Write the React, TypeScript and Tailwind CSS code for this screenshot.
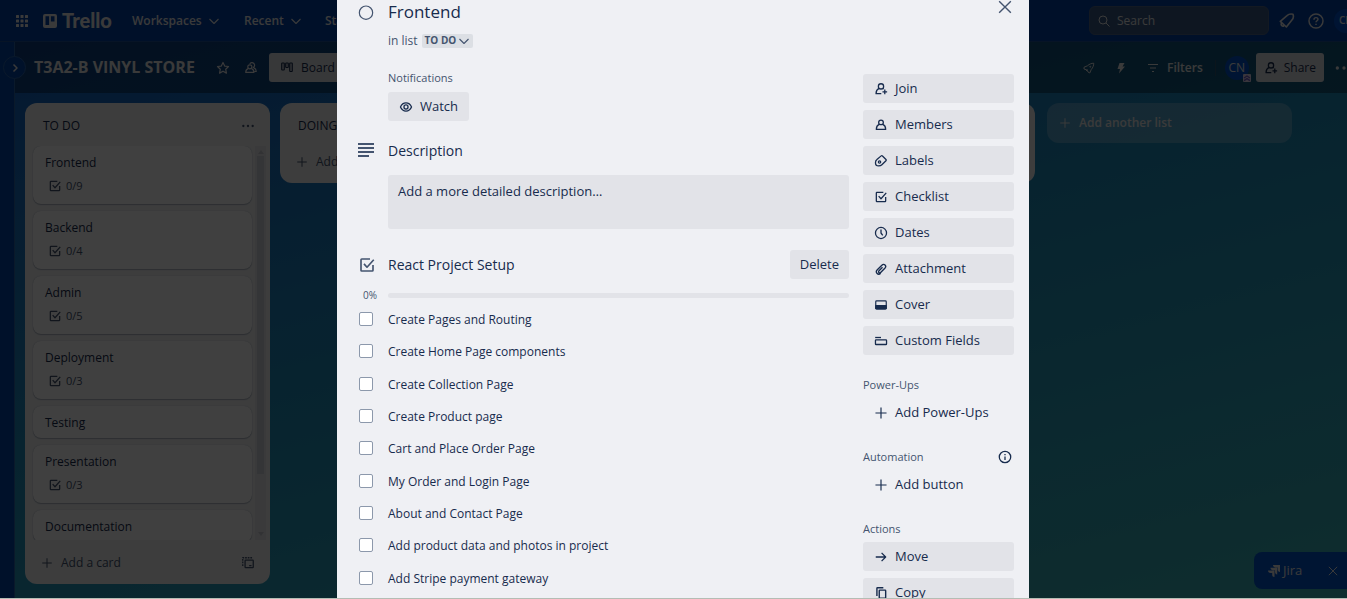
import type { ReactNode } from "react";

type IconProps = { className?: string; children?: ReactNode; w?: number };

function Svg({ className = "size-4", children, w = 2 }: IconProps) {
  return (
    <svg
      viewBox="0 0 24 24"
      className={`shrink-0 ${className}`}
      fill="none"
      stroke="currentColor"
      strokeWidth={w}
      strokeLinejoin="round"
      aria-hidden="true"
    >
      {children}
    </svg>
  );
}

const Chevron = ({ className }: IconProps) => (
  <Svg className={className} w={2.2}><path d="M3 8l9 9 9-9" /></Svg>
);
const Plus = ({ className }: IconProps) => (
  <Svg className={className} w={2}><path d="M12 2.500v19M2.500 12h19" /></Svg>
);
const Cross = ({ className }: IconProps) => (
  <Svg className={className} w={2.4}><path d="M2 2l20 20M22 2L2 22" /></Svg>
);
const CheckSquare = ({ className }: IconProps) => (
  <Svg className={className} w={2.2}>
    <path d="M16 4H5a1 1 0 0 0-1 1v14a1 1 0 0 0 1 1h14a1 1 0 0 0 1-1v-7" />
    <path d="M8 10.500l4 4.500 9-10" />
  </Svg>
);
const Person = ({ className }: IconProps) => (
  <Svg className={className} w={2.2}>
    <circle cx="12" cy="7.500" r="4" />
    <path d="M8.600 11C5.400 12.500 4 15.500 4 19.500h16c0-4-1.400-7-4.600-8.500" />
  </Svg>
);
const PersonAdd = ({ className }: IconProps) => (
  <Svg className={className} w={2.2}>
    <circle cx="12" cy="7.500" r="4.500" />
    <path d="M8.600 11C5.400 12.500 3.500 15.500 3.500 20h9M15 11l1.500 1M18.500 13v8M14.500 17h8" />
  </Svg>
);
const People = ({ className }: IconProps) => (
  <Svg className={className}>
    <circle cx="10" cy="10" r="3.500" />
    <path d="M7 13c-2.800 1-4 3.500-4 6.500h14c0-3-1.200-5.500-4-6.500M10 5c1-3 7-3 8 1 .6 2-.3 3.700-2 5 3 1.200 5 3.500 5 7h-3" />
  </Svg>
);
const Tag = ({ className }: IconProps) => (
  <Svg className={className} w={2.2}>
    <path d="M12.300 3.200L5 9.400C3 11 2.500 12.500 2.500 15c0 3.500 2 5.500 5.500 5.500 2.500 0 4-.5 5.500-2l7-7c.7-.7.7-1.500 0-2.200l-6-6c-.7-.7-1.500-.7-2.200-.1z" />
    <circle cx="9.500" cy="13.800" r="2" />
  </Svg>
);
const Clock = ({ className }: IconProps) => (
  <Svg className={className} w={2.2}><circle cx="12" cy="12" r="9.500" /><path d="M12 6v6l3 4" /></Svg>
);
const Clip = ({ className }: IconProps) => (
  <Svg className={className} w={2.3}>
    <path d="M11.500 19.200c-2 2-4.600 2-6.200.4s-1.600-4.300.4-6.300l7.800-7.800c1.800-1.800 4-1.800 5.400-.4s1.500 3.800-.3 5.600l-7.200 7.200c-1 1-2.200 1-3 .2s-.8-2 .2-3l6-6" />
  </Svg>
);
const Cover = ({ className }: IconProps) => (
  <Svg className={className}>
    <rect x="3" y="5" width="18" height="14" rx="1.500" />
    <path d="M3 13h18v5H3z" fill="currentColor" />
  </Svg>
);
const Fields = ({ className }: IconProps) => (
  <Svg className={className} w={2.2}><path d="M2 6h10" /><rect x="2.500" y="10" width="19" height="8" rx="1" /></Svg>
);
const Arrow = ({ className }: IconProps) => (
  <Svg className={className} w={2.2}><path d="M3 12h17M13 5l7 7-7 7" /></Svg>
);
const Copy = ({ className }: IconProps) => (
  <Svg className={className} w={2.4}>
    <rect x="9" y="7" width="11" height="14" rx="1" />
    <path d="M5 17V4a1 1 0 0 1 1-1h10" />
  </Svg>
);
const Eye = ({ className }: IconProps) => (
  <Svg className={className} w={2.2}>
    <path d="M2.500 12C4.500 7.500 7.500 5 12 5s7.500 2.500 9.500 7c-2 4.500-5 7-9.500 7S4.500 16.500 2.500 12z" />
    <circle cx="12" cy="12" r="3.500" />
  </Svg>
);
const Info = ({ className }: IconProps) => (
  <Svg className={className} w={2.2}>
    <circle cx="12" cy="12" r="9.800" />
    <path d="M12 11v6M12 6.800v2" />
  </Svg>
);
const Help = ({ className }: IconProps) => (
  <Svg className={className} w={2.2}>
    <circle cx="12" cy="12" r="10.500" />
    <path d="M9 10c0-4 6-4 6-.5 0 2-3 2.200-3 4.500M12 16v2" />
  </Svg>
);
const Bell = ({ className }: IconProps) => (
  <Svg className={className} w={2.4}>
    <path d="M2 12.500L12 4c2.500-2.300 6-2.800 9-2 1 2.500.6 6-1.600 8.500L11 21zM3.500 15.500c-1 2.500 1 5 4 4" />
  </Svg>
);
const Rocket = ({ className }: IconProps) => (
  <Svg className={className}>
    <path d="M2 10.500l7-3C13 4 17 2.500 21.500 2.500c0 4.500-1.500 8.500-5 12.500l-3 7-3.500-2-2-4-6-2zM9 15l-3 3" />
    <circle cx="14.500" cy="9.500" r="1" />
  </Svg>
);
const Star = ({ className }: IconProps) => (
  <Svg className={className}>
    <path d="M12 2.500l2.900 6.200 6.600.8-4.900 4.600 1.300 6.700L12 17.500l-5.900 3.300 1.300-6.700-4.900-4.600 6.600-.8z" />
  </Svg>
);
const Dots = ({ className }: IconProps) => (
  <Svg className={className}>
    <g fill="currentColor" stroke="none">
      <circle cx="4" cy="12" r="2" /><circle cx="12" cy="12" r="2" /><circle cx="20" cy="12" r="2" />
    </g>
  </Svg>
);
const BoardIcon = ({ className }: IconProps) => (
  <Svg className={className} w={2.4}>
    <rect x="1.500" y="2" width="5" height="14" rx="1" /><rect x="9.500" y="2" width="5" height="9" rx="1" /><rect x="17.500" y="2" width="5" height="17" rx="1" />
  </Svg>
);
const Template = ({ className }: IconProps) => (
  <Svg className={className} w={2.2}>
    <path d="M3 17V3h17" strokeDasharray="3 1.500" />
    <rect x="7" y="7" width="14" height="13" rx="1" />
    <path d="M14 16.500h4" />
  </Svg>
);

const cards = [
  { title: "Frontend", count: "0/9" },
  { title: "Backend", count: "0/4" },
  { title: "Admin", count: "0/5" },
  { title: "Deployment", count: "0/3" },
  { title: "Testing" },
  { title: "Presentation", count: "0/3" },
  { title: "Documentation" },
];

const items = [
  "Create Pages and Routing",
  "Create Home Page components",
  "Create Collection Page",
  "Create Product page",
  "Cart and Place Order Page",
  "My Order and Login Page",
  "About and Contact Page",
  "Add product data and photos in project",
  "Add Stripe payment gateway",
];

const cardActions = [
  { label: "Join", Icon: PersonAdd },
  { label: "Members", Icon: Person },
  { label: "Labels", Icon: Tag },
  { label: "Checklist", Icon: CheckSquare },
  { label: "Dates", Icon: Clock },
  { label: "Attachment", Icon: Clip },
  { label: "Cover", Icon: Cover },
  { label: "Custom Fields", Icon: Fields },
];

function NavBar() {
  return (
    <header className="flex h-[42px] shrink-0 items-center border-b border-[#1d4f98] bg-[#0040a4] pr-2 pl-4 text-xs font-semibold text-[#e6e6e6]">
      <button aria-label="Apps" className="mr-[15px]">
        <svg viewBox="0 0 12 12" className="size-3" fill="currentColor" aria-hidden="true">
          {[0, 4.5, 9].map((y) => [0, 4.5, 9].map((x) => <rect key={`${x}-${y}`} x={x} y={y} width="3" height="3" rx="0.5" />))}
        </svg>
      </button>
      <a href="#home" className="flex w-[89px] items-center gap-[5px]">
        <svg viewBox="0 0 14 14" className="size-3.5 shrink-0" aria-hidden="true">
          <path fill="currentColor" fillRule="evenodd" d="M2 0h10a2 2 0 0 1 2 2v10a2 2 0 0 1-2 2H2a2 2 0 0 1-2-2V2a2 2 0 0 1 2-2zm.5 2.200v8.800h3.600V2.200zm5.400 0v5.300h3.600V2.200z" />
        </svg>
        <span className="font-['Lato',sans-serif] text-[20px] font-black">Trello</span>
      </a>
      <button className="flex w-[112px] items-center gap-1.5">Workspaces<Chevron className="size-3" /></button>
      <button className="flex w-[81px] items-center gap-1.5">Recent<Chevron className="size-3" /></button>
      <button className="flex items-center gap-1.5">Starred<Chevron className="size-3" /></button>
      <div className="flex-1" />
      <label className="flex h-[29px] w-[180px] items-center gap-[7px] rounded-md border border-[#4d6486] bg-[#3a5a85] px-2 font-normal">
        <Svg className="size-3"><circle cx="10" cy="10" r="8" /><path d="M16 16l7 7" /></Svg>
        <input aria-label="Search" placeholder="Search" className="w-full bg-transparent placeholder:text-[#e6e6e6] outline-none" />
      </label>
      <button aria-label="Notifications" className="ml-2.5"><Bell className="size-4" /></button>
      <button aria-label="Information" className="ml-[13px]"><Help className="size-4" /></button>
      <button className="ml-2.5 grid size-6 place-items-center rounded-full bg-[#0052cc] text-[10px]">CN</button>
    </header>
  );
}

function BoardHeader() {
  return (
    <div className="flex h-[51px] shrink-0 items-center bg-black/35 pl-[19px] text-xs text-[#e6e6e6]">
      <h1 className="w-[182px] text-[16px] font-bold whitespace-nowrap">T3A2-B VINYL STORE</h1>
      <button aria-label="Star board"><Star className="size-3.5" /></button>
      <button aria-label="Visibility" className="ml-3.5"><People className="size-3.5" /></button>
      <button className="ml-[11px] flex h-[29px] items-center gap-2 rounded-[3px] bg-[#dcdfe4] px-3 text-[#172b4d]">
        <BoardIcon className="size-3" />Board
      </button>
      <div className="flex-1" />
      <button aria-label="Power-Ups" className="mr-5"><Rocket className="size-3" /></button>
      <button aria-label="Automation" className="mr-5">
        <Svg className="size-3"><path fill="currentColor" stroke="none" d="M9 2h10l-4 7h5L8 23l2-9H5z" /></Svg>
      </button>
      <button className="flex items-center gap-2 font-semibold">
        <Svg className="size-3"><path d="M2 5h20M6 12h12M10 19h4" /></Svg>Filters
      </button>
      <span className="mr-[9px] ml-3 h-4 w-px bg-[#2f5570]" />
      <button className="relative grid size-6 place-items-center rounded-full bg-[#0052cc] text-xs">
        CN
        <span className="absolute -right-0.5 -bottom-0.5 grid size-2 place-items-center rounded-[1px] bg-[#e4d7f0] text-[#6e5dc6]">
          <Svg className="size-2" w={4}><path d="M3 12l9-6 9 6M3 20l9-6 9 6" /></Svg>
        </span>
      </button>
      <button className="ml-[7px] flex h-[29px] items-center gap-1.5 rounded-[3px] bg-[#dcdfe4] px-2 text-[#172b4d]">
        <PersonAdd className="size-3.5" />Share
      </button>
      <button aria-label="Board menu" className="mr-3 ml-2.5"><Dots className="size-5" /></button>
    </div>
  );
}

function ShortList({ title }: { title: string }) {
  return (
    <section className="flex h-20 w-[245px] shrink-0 flex-col gap-4 rounded-xl bg-[#f1f2f4] px-4 pt-[13px] text-xs text-[#172b4d]">
      <h2 className="pl-0.5 leading-5 font-medium">{title}</h2>
      <button className="flex items-center gap-2 leading-5 font-medium text-[#44546f]"><Plus className="size-3" />Add a card</button>
    </section>
  );
}

function TodoList() {
  return (
    <section className="flex h-[481px] w-[245px] shrink-0 flex-col rounded-xl bg-[#f1f2f4] text-xs text-[#172b4d]">
      <div className="flex h-[43px] shrink-0 items-center justify-between pt-0.5 pr-[15px] pl-[18px]">
        <h2 className="font-medium">TO DO</h2>
        <button aria-label="List actions" className="text-[#44546f]"><Dots className="size-3.5" /></button>
      </div>
      <div className="flex h-[394px] gap-[3px] overflow-hidden pr-1 pl-2">
        <div className="flex flex-1 flex-col gap-[7px]">
          {cards.map((c) => (
            <a
              key={c.title}
              href="#card"
              className={`${c.count ? "h-[58px]" : "h-8"} block shrink-0 rounded-lg bg-white px-3 pt-[7px] shadow-[0_1px_1px_#091e4240,0_0_1px_#091e424f]`}
            >
              <span className="block leading-5">{c.title}</span>
              {c.count && (
                <span className="mt-[5px] flex items-center gap-1 pl-[3px] text-[11px] leading-4 text-[#44546f]">
                  <CheckSquare className="size-3.5" />{c.count}
                </span>
              )}
            </a>
          ))}
        </div>
        <div className="flex w-[11px] flex-col items-center bg-[#e6e7eb] py-1">
          <svg viewBox="0 0 6 4" className="h-1 w-1.5" fill="#c6c8d0"><path d="M0 4l3-4 3 4z" /></svg>
          <div className="mt-0.5 h-[318px] w-[7px] bg-[#cfd1dc]" />
          <svg viewBox="0 0 6 4" className="mt-auto h-1 w-1.5" fill="#c6c8d0"><path d="M0 0l3 4 3-4z" /></svg>
        </div>
      </div>
      <div className="flex flex-1 items-center justify-between pt-0.5 pr-[15px] pl-4 text-[#44546f]">
        <button className="flex items-center gap-2 font-medium"><Plus className="size-3" />Add a card</button>
        <button aria-label="Create from template"><Template className="size-3.5" /></button>
      </div>
    </section>
  );
}

function SideLabel({ children }: { children: ReactNode }) {
  return <h3 className="text-[11px] leading-4 font-medium text-[#44546f]">{children}</h3>;
}

function SideButton({ label, Icon, plain }: { label: string; Icon: (p: IconProps) => ReactNode; plain?: boolean }) {
  return (
    <button className={`${plain ? "" : "bg-[#e2e3e8]"} flex h-[29px] w-full shrink-0 items-center gap-[7px] rounded-[3px] pl-[11px] text-left font-medium`}>
      <Icon className="size-3.5" />{label}
    </button>
  );
}

function CardDialog() {
  return (
    <div role="dialog" aria-label="Frontend" className="h-full w-[692px] overflow-hidden bg-[#eff0f4] pr-[15px] pl-[21px] text-[13px] text-[#172b4d]">
      <div className="flex h-6 items-center">
        <Svg className="mr-3.5 size-4 text-[#44546f]" w={1.8}><circle cx="12" cy="13" r="10" /></Svg>
        <h2 className="flex-1 text-[17px] leading-6 font-medium">Frontend</h2>
        <button aria-label="Close" className="self-start text-[#44546f]"><Cross className="mr-0.5 size-3.5" /></button>
      </div>
      <div className="mt-2 flex h-[18px] items-center gap-1 pl-[30px] text-xs text-[#44546f]">
        in list
        <button className="flex h-3.5 items-center gap-0.5 rounded-[2px] bg-[#dcdfe4] px-[3px] text-[10px] font-bold">
          TO DO<Chevron className="size-3" />
        </button>
      </div>
      <div className="mt-5 flex gap-3.5">
        <main className="flex-1">
          <div className="pl-[30px]">
            <SideLabel>Notifications</SideLabel>
            <button className="mt-1.5 flex h-[29px] items-center gap-[7px] rounded-[3px] bg-[#e2e3e8] px-[11px] font-medium">
              <Eye className="size-3.5" />Watch
            </button>
          </div>
          <div className="mt-[19px] flex h-5 items-center gap-3.5">
            <svg viewBox="0 0 16 14" className="h-3.5 w-4 fill-[#44546f]" aria-hidden="true">
              <path d="M0 0h16v2H0zM0 4h16v2H0zM0 8h16v2H0zM0 12h11v2H0z" />
            </svg>
            <h3 className="text-[14px] font-medium">Description</h3>
          </div>
          <div className="mt-[15px] pl-[30px]">
            <button className="block h-[54px] w-full rounded-[3px] bg-[#e2e3e8] px-2.5 pt-1.5 pb-7 text-left leading-5">
              Add a more detailed description…
            </button>
          </div>
          <div className="mt-[21px] flex h-[29px] items-center gap-3">
            <CheckSquare className="size-[18px] text-[#44546f]" />
            <h3 className="flex-1 text-[14px] font-medium">React Project Setup</h3>
            <button className="h-[29px] rounded-[3px] bg-[#e2e3e8] px-2.5 font-medium">Delete</button>
          </div>
          <div className="mt-2 flex h-4 items-center">
            <span className="w-[30px] pl-[5px] text-[10px] text-[#44546f]">0%</span>
            <div role="progressbar" aria-valuenow={0} className="h-[5px] flex-1 rounded bg-[#e2e3e8]" />
          </div>
          <ul className="grid h-[291px] auto-rows-fr text-xs">
            {items.map((item) => (
              <li key={item} className="flex items-center">
                <label className="flex items-center gap-[15px]">
                  <input type="checkbox" className="ml-px size-3.5 appearance-none rounded-[2px] border border-[#8c98ab] bg-white" />
                  <span className="pt-0.5">{item}</span>
                </label>
              </li>
            ))}
          </ul>
        </main>
        <aside className="flex w-[151px] shrink-0 flex-col">
          <div className="mt-1 flex flex-col gap-[7px]">
            {cardActions.map((a) => <SideButton key={a.label} {...a} />)}
          </div>
          <div className="mt-[22px] flex flex-col gap-[5px]">
            <SideLabel>Power-Ups</SideLabel>
            <SideButton label="Add Power-Ups" Icon={Plus} plain />
          </div>
          <div className="mt-[22px] flex flex-col gap-[5px]">
            <div className="flex items-center justify-between pr-0.5">
              <SideLabel>Automation</SideLabel>
              <button aria-label="About automation"><Info className="size-3.5" /></button>
            </div>
            <SideButton label="Add button" Icon={Plus} plain />
          </div>
          <div className="mt-[22px] flex flex-col gap-[5px]">
            <SideLabel>Actions</SideLabel>
            <div className="flex flex-col gap-[7px]">
              <SideButton label="Move" Icon={Arrow} />
              <SideButton label="Copy" Icon={Copy} />
            </div>
          </div>
        </aside>
      </div>
    </div>
  );
}

export default function App() {
  return (
    <div className="h-screen overflow-hidden border-b border-[#b4bdb4] font-['Open_Sans','Noto_Sans',sans-serif]">
      <div className="relative -mr-[19px] flex h-full flex-col overflow-hidden">
        <NavBar />
        <div className="flex min-h-0 flex-1 bg-linear-[165deg] from-[#1460c4] via-[#2090bc] to-[#3cb4b8]">
          <aside className="relative w-[15px] shrink-0 border-r border-[#2a63a8] bg-[#0044a8]">
            <button aria-label="Expand sidebar" className="absolute top-3.5 left-[3px] z-10 grid size-[23px] place-items-center rounded-full border border-[#2a63a8] bg-[#0044a8] text-[#e6e6e6]">
              <Svg className="size-3" w={3}><path d="M9 5l7 7-7 7" /></Svg>
            </button>
          </aside>
          <div className="flex min-w-0 flex-1 flex-col">
            <BoardHeader />
            <div className="flex flex-1 items-start gap-2.5 overflow-hidden pt-2.5 pl-2.5">
              <TodoList />
              <ShortList title="DOING" />
              <ShortList title="TESTING" />
              <ShortList title="DONE" />
              <button className="ml-0.5 flex h-10 w-[245px] shrink-0 items-center gap-2 rounded-xl bg-white/24 px-3 text-xs font-semibold text-[#e6e6e6]">
                <Plus className="size-3" />Add another list
              </button>
            </div>
          </div>
        </div>
        <div className="absolute right-0 bottom-[9px] flex h-[37px] w-28 items-center rounded-l-lg bg-[#0055cc] pl-3.5 text-[13px] text-[#e6e6e6]">
          <svg viewBox="0 0 12 12" className="mr-[3px] size-3" fill="currentColor" aria-hidden="true">
            <path d="M5 0h7v7c-1.500 0-2.300-1-2.300-2.400V2.500H7.500C6 2.500 5 1.500 5 0zM2.500 2.800h6.700v6.700C8 9.500 7 8.500 7 7V5.200H5C3.500 5.200 2.500 4.200 2.500 2.800zM0 5.500h6.500V12C5 12 4.200 11 4.200 9.700V8H2.500C1 8 0 7 0 5.500z" />
          </svg>
          <span className="w-[45px]">Jira</span>
          <button aria-label="Dismiss"><Cross className="size-2.5" /></button>
        </div>
        <div className="absolute inset-0 z-20 flex justify-center bg-black/75">
          <CardDialog />
        </div>
      </div>
    </div>
  );
}
